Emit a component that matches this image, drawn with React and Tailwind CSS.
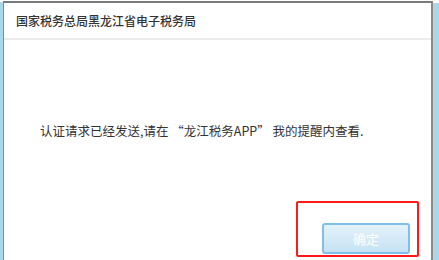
export default function App() {
  const font = { fontFamily: '"Microsoft YaHei","Noto Sans CJK SC",sans-serif' };
  return (
    <div className="w-[439px] h-[260px] bg-white flex overflow-hidden" style={font}>
      <div className="w-[3px] mt-[2px] bg-[#a8d8ea]" />
      <div className="flex-1 flex flex-col mt-[1px] border-t-2 border-l border-r-2 border-[#8a8a8a] border-t-[#7a7a7a] bg-white">
        <div className="h-[35px] flex items-center pl-[12px] text-[12px] text-[#333] font-medium">
          国家税务总局黑龙江省电子税务局
        </div>
        <div className="h-[2px] bg-[#ebebeb]" />
        <div className="flex-1 flex flex-col">
          <div className="h-[82px]" />
          <div className="pl-[36px] text-[12.5px] text-[#333] leading-[18px]">
            认证请求已经发送,请在 “龙江税务APP” 我的提醒内查看.
          </div>
          <div className="flex-1" />
          <div className="flex justify-end pr-[12px] pb-[3px]">
            <div className="w-[123px] h-[56px] border-2 border-[#ff1a1a] rounded-[2px] flex items-end justify-start pl-[24px] pb-[1px]">
              <div className="w-[88px] h-[31px] rounded-[3px] border-2 border-[#7fc0e8] bg-gradient-to-b from-[#e4f2fb] to-[#c5e2f3] flex items-center justify-center text-white text-[13px]">
                确定
              </div>
            </div>
          </div>
        </div>
      </div>
      <div className="w-[6px] mt-[3px] bg-[#a8d8ea]" />
    </div>
  );
}
